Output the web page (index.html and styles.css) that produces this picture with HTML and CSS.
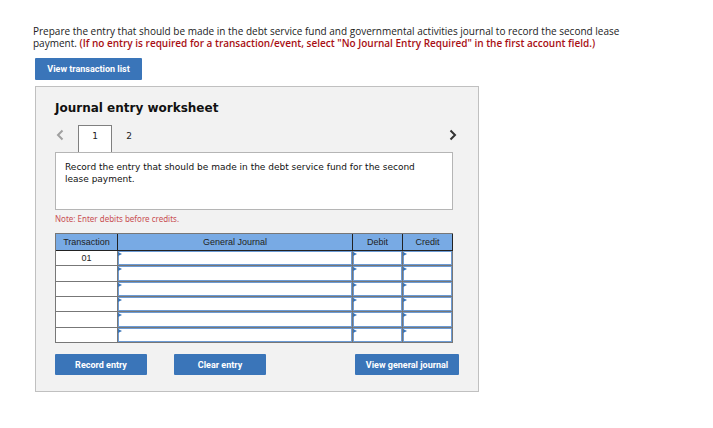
FILE: index.html
```
<!DOCTYPE html>
<html lang="en">
<head>
    <meta charset="UTF-8">
    <meta name="viewport" content="width=device-width, initial-scale=1.0">
    <title>Journal entry worksheet</title>
    <link rel="stylesheet" href="styles.css">
</head>
<body>

<main class="question">
    <p class="prompt">Prepare the entry that should be made in the debt service fund and governmental activities journal to record the second lease payment. <strong>(If no entry is required for a transaction/event, select "No Journal Entry Required" in the first account field.)</strong></p>

    <button type="button" class="btn btn-list">View transaction list</button>

    <section class="worksheet">
        <h1>Journal entry worksheet</h1>

        <div class="pager">
            <button type="button" class="arrow" aria-label="Previous" disabled>
                <svg width="8" height="12" viewBox="0 0 8 12"><path d="M6.5 1.5L2 6l4.500 4.500"/></svg>
            </button>
            <button type="button" class="tab active">1</button>
            <button type="button" class="tab">2</button>
            <button type="button" class="arrow next" aria-label="Next">
                <svg width="8" height="12" viewBox="0 0 8 12"><path d="M1.500 1.500L6 6l-4.500 4.500"/></svg>
            </button>
        </div>

        <div class="instruction">
            <p>Record the entry that should be made in the debt service fund for the second lease payment.</p>
        </div>

        <p class="note">Note: Enter debits before credits.</p>

        <table class="journal">
            <thead>
                <tr>
                    <th class="col-transaction">Transaction</th>
                    <th>General Journal</th>
                    <th class="col-amount">Debit</th>
                    <th class="col-amount">Credit</th>
                </tr>
            </thead>
            <tbody>
                <tr>
                    <td>01</td>
                    <td class="entry"><input type="text" aria-label="Account, row 1"></td>
                    <td class="entry"><input type="text" aria-label="Debit, row 1"></td>
                    <td class="entry"><input type="text" aria-label="Credit, row 1"></td>
                </tr>
                <tr>
                    <td></td>
                    <td class="entry"><input type="text" aria-label="Account, row 2"></td>
                    <td class="entry"><input type="text" aria-label="Debit, row 2"></td>
                    <td class="entry"><input type="text" aria-label="Credit, row 2"></td>
                </tr>
                <tr>
                    <td></td>
                    <td class="entry"><input type="text" aria-label="Account, row 3"></td>
                    <td class="entry"><input type="text" aria-label="Debit, row 3"></td>
                    <td class="entry"><input type="text" aria-label="Credit, row 3"></td>
                </tr>
                <tr>
                    <td></td>
                    <td class="entry"><input type="text" aria-label="Account, row 4"></td>
                    <td class="entry"><input type="text" aria-label="Debit, row 4"></td>
                    <td class="entry"><input type="text" aria-label="Credit, row 4"></td>
                </tr>
                <tr>
                    <td></td>
                    <td class="entry"><input type="text" aria-label="Account, row 5"></td>
                    <td class="entry"><input type="text" aria-label="Debit, row 5"></td>
                    <td class="entry"><input type="text" aria-label="Credit, row 5"></td>
                </tr>
                <tr>
                    <td></td>
                    <td class="entry"><input type="text" aria-label="Account, row 6"></td>
                    <td class="entry"><input type="text" aria-label="Debit, row 6"></td>
                    <td class="entry"><input type="text" aria-label="Credit, row 6"></td>
                </tr>
            </tbody>
        </table>

        <div class="actions">
            <button type="button" class="btn">Record entry</button>
            <button type="button" class="btn">Clear entry</button>
            <button type="button" class="btn btn-wide">View general journal</button>
        </div>
    </section>
</main>

</body>
</html>
```
FILE: styles.css
```
* {
    box-sizing: border-box;
}
body {
    margin: 0;
    background-color: #ffffff;
    color: #222222;
    font-family: "Liberation Sans", Arial, sans-serif;
}
.question {
    padding: 25px 35px 36px;
}
.prompt {
    max-width: 600px;
    margin: 0 0 9px -2px;
    font-family: "Open Sans", sans-serif;
    font-size: 10px;
    line-height: 12px;
}
.prompt strong {
    color: #a80f14;
    font-weight: 600;
}
.btn {
    min-width: 92px;
    height: 21px;
    padding: 0 4px;
    border: none;
    border-radius: 1px;
    background-color: #3a75b9;
    color: #ffffff;
    font-family: Roboto, sans-serif;
    font-size: 9px;
    font-weight: 700;
    cursor: pointer;
}
.btn:hover {
    background-color: #2f629d;
}
.btn-list {
    display: block;
    min-width: 107px;
    height: 22px;
}
.btn-wide {
    min-width: 104px;
}
.worksheet {
    max-width: 444px;
    margin-top: 6px;
    padding: 13px 25px 16px 19px;
    border: 1px solid #c0c0c0;
    background-color: #f2f2f2;
}
.worksheet h1 {
    margin: 0 0 9px;
    color: #111111;
    font-family: "DejaVu Sans", Verdana, sans-serif;
    font-size: 12px;
    line-height: 16px;
}
.pager {
    display: flex;
    height: 27px;
}
.tab {
    width: 34px;
    padding: 0 0 6px;
    border: none;
    background: none;
    color: #222222;
    font-family: "DejaVu Sans", Verdana, sans-serif;
    font-size: 9px;
    cursor: pointer;
}
.tab.active {
    border: 1px solid #808080;
    border-bottom: none;
    background-color: #ffffff;
}
.arrow {
    width: 23px;
    padding: 0 0 8px 1px;
    border: none;
    background: none;
    line-height: 0;
    text-align: left;
    cursor: pointer;
}
.arrow path {
    fill: none;
    stroke: #333333;
    stroke-width: 2;
}
.arrow:disabled path {
    stroke: #a0a0a0;
}
.arrow.next {
    width: 8px;
    padding-left: 0;
    margin-left: auto;
    margin-right: -4px;
}
.instruction {
    min-height: 58px;
    padding: 8px 30px 8px 9px;
    border: 1px solid #b5b5b5;
    background-color: #ffffff;
    color: #111111;
    font-family: "DejaVu Sans", Verdana, sans-serif;
    font-size: 9px;
    line-height: 12px;
}
.instruction p {
    margin: 0;
}
.note {
    margin: 3px 0 9px;
    color: #c94f52;
    font-family: "Noto Sans", Verdana, sans-serif;
    font-size: 8px;
    line-height: 11px;
}
.journal {
    width: 100%;
    border-top: 1px solid #777777;
    border-left: 1px solid #777777;
    border-spacing: 0;
    table-layout: fixed;
    background-color: #ffffff;
    font-size: 9px;
    line-height: 12px;
    text-align: center;
}
.journal th {
    height: 17px;
    padding: 0;
    border-right: 1px solid #222222;
    border-bottom: 1px solid #222222;
    background-color: #78aae4;
    font-weight: 400;
}
.journal td {
    padding: 0;
    border-right: 1px solid #777777;
    border-bottom: 1px solid #777777;
}
.col-transaction {
    width: 62px;
}
.col-amount {
    width: 50px;
}
/* small marker in the corner of every cell that can be filled in */
.journal .entry {
    position: relative;
}
.entry::before {
    content: "";
    position: absolute;
    top: 1px;
    left: 0;
    border: 2px solid transparent;
    border-left: 4px solid #3a75b9;
}
.entry input {
    display: block;
    width: 100%;
    height: 14px;
    padding: 0 4px;
    border: 1px solid #6c9bd5;
    background-color: #ffffff;
    font-size: 9px;
}
.journal tr:nth-child(3n + 2) input {
    height: 15px;
}
.actions {
    display: flex;
    gap: 27px;
    margin-top: 11px;
}
.actions .btn-wide {
    margin-left: auto;
    margin-right: -6px;
}
```
